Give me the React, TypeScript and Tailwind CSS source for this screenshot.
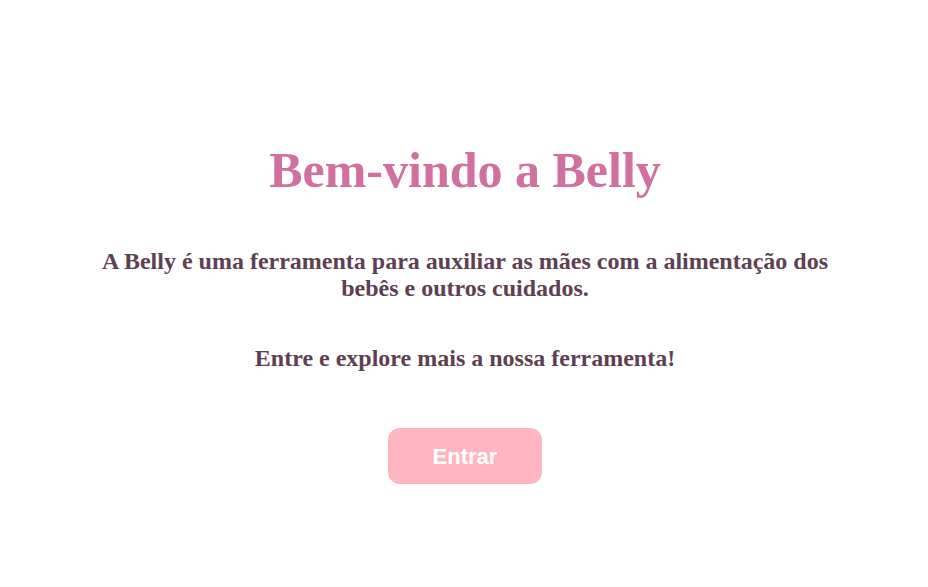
import React from 'react';

const App: React.FC = () => {
  return (
    <div className="min-h-screen bg-white flex flex-col items-center pt-[143px] pl-[2px] font-['Liberation_Serif','Times_New_Roman',serif] text-center">
      <h1 className="text-[50px] font-bold leading-[55px] text-[#d1709f]">Bem-vindo a Belly</h1>

      <p className="mt-[50px] max-w-[750px] text-[24px] font-bold leading-[27px] text-[#5e4053]">
        A Belly é uma ferramenta para auxiliar as mães com a alimentação dos bebês e outros cuidados.
      </p>

      <p className="mt-[43px] text-[24px] font-bold leading-[27px] text-[#5e4053]">
        Entre e explore mais a nossa ferramenta!
      </p>

      <button className="mt-[56px] w-[154px] h-[56px] rounded-xl bg-[#ffb6c1] text-white text-[22px] font-bold font-['Liberation_Sans',Arial,sans-serif]">
        Entrar
      </button>
    </div>
  );
};

export default App;
